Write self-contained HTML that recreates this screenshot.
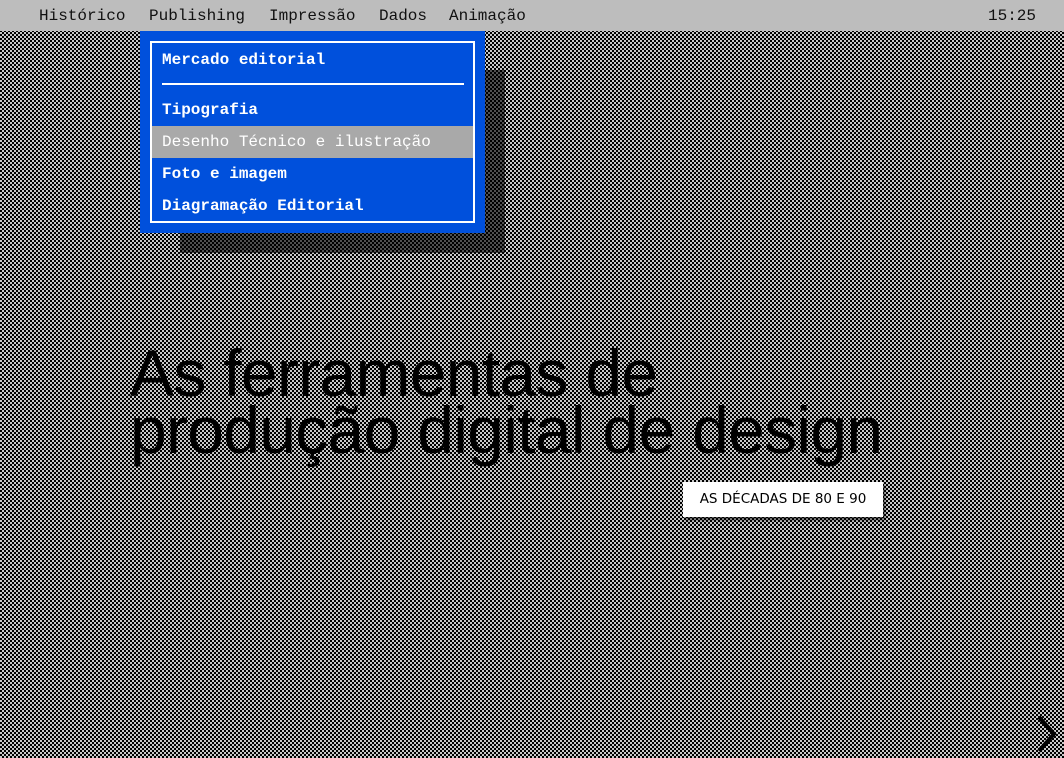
<!DOCTYPE html>
<html><head><meta charset="utf-8"><style>
html,body{margin:0;padding:0;}
body{width:1064px;height:758px;overflow:hidden;position:relative;
background:repeating-conic-gradient(#000 0 25%,#c8c8c8 0 50%) 0 0/4px 4px;
font-family:"Liberation Mono",monospace;}
.bar{position:absolute;left:0;top:0;width:1064px;height:31px;background:#bdbdbd;}
.bar span{position:absolute;top:7px;font-size:16px;color:#111;}
.shadow{position:absolute;left:180px;top:70px;width:325px;height:183px;background:rgba(0,0,0,.6);}
.menu{position:absolute;left:140px;top:31px;width:345px;height:202px;background:#0050dc;}
.inner{position:absolute;left:10px;top:10px;width:321px;height:178px;border:2px solid #fff;}
.it{position:absolute;left:10px;color:#fff;font-weight:bold;font-size:16px;}
.hl{position:absolute;left:0;top:83px;width:321px;height:32px;background:#a9a9a9;}
.hr{position:absolute;left:10px;top:40px;width:302px;height:2px;background:#fff;}
h1{position:absolute;left:130px;top:345px;margin:0;font-family:"Liberation Sans",sans-serif;font-weight:normal;font-size:66px;line-height:57px;letter-spacing:-0.7px;color:#000;}
.btn{position:absolute;left:683px;top:482px;width:200px;height:35px;background:#fff;box-shadow:2px 3px 3px rgba(0,0,0,.6);font-family:"DejaVu Sans",sans-serif;font-size:13.5px;text-align:center;line-height:35px;color:#000;}
</style></head><body>
<div class="bar">
<span style="left:39px">Histórico</span>
<span style="left:149px">Publishing</span>
<span style="left:269px">Impressão</span>
<span style="left:379px">Dados</span>
<span style="left:449px">Animação</span>
<span style="left:988px">15:25</span>
</div>
<div class="shadow"></div>
<div class="menu"><div class="inner">
<div class="hl"></div>
<div class="it" style="top:8px">Mercado editorial</div>
<div class="hr"></div>
<div class="it" style="top:58px">Tipografia</div>
<div class="it" style="top:90px;font-weight:normal">Desenho Técnico e ilustração</div>
<div class="it" style="top:122px">Foto e imagem</div>
<div class="it" style="top:154px">Diagramação Editorial</div>
</div></div>
<h1>As ferramentas de<br>produção digital de design</h1>
<div class="btn">AS DÉCADAS DE 80 E 90</div>
<svg style="position:absolute;left:1034px;top:714px" width="26" height="40" viewBox="0 0 26 40"><path d="M5 3 L20 20 L5 37" fill="none" stroke="#000" stroke-width="4"/></svg>
</body></html>
